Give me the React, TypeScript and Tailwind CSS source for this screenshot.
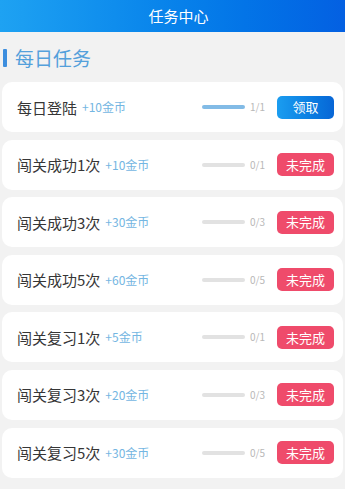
const tasks = [
  { name: "每日登陆", reward: "+10金币", done: 1, total: 1 },
  { name: "闯关成功1次", reward: "+10金币", done: 0, total: 1 },
  { name: "闯关成功3次", reward: "+30金币", done: 0, total: 3 },
  { name: "闯关成功5次", reward: "+60金币", done: 0, total: 5 },
  { name: "闯关复习1次", reward: "+5金币", done: 0, total: 1 },
  { name: "闯关复习3次", reward: "+20金币", done: 0, total: 3 },
  { name: "闯关复习5次", reward: "+30金币", done: 0, total: 5 },
];

export default function App() {
  return (
    <main
      className="min-h-screen w-full bg-[#f2f2f2]"
      style={{ fontFamily: '"Noto Sans CJK SC", "Noto Sans", sans-serif' }}
    >
      <header className="flex h-[32px] items-center justify-center bg-gradient-to-r from-[#1ea2f2] to-[#0460e2] pl-[12px] text-[15px] text-white">
        任务中心
      </header>

      <div className="flex h-[50px] items-center pl-[3px] pt-[1px]">
        <span className="h-[18px] w-[4px] rounded-[1px] bg-[#3d8ede]" />
        <h1 className="ml-[8px] text-[19px] leading-none text-[#54a0db]">每日任务</h1>
      </div>

      <section className="flex flex-col gap-[7.6px] px-[2px]">
        {tasks.map((task) => {
          const complete = task.done >= task.total;
          return (
            <div
              key={task.name}
              className="flex h-[50px] items-center rounded-[10px] bg-white pl-[15px] pr-[9px]"
            >
              <p className="text-[15px] leading-none text-[#363636]">{task.name}</p>
              <span className="ml-[5px] text-[12px] leading-none text-[#74b6e2]">{task.reward}</span>
              <div className="ml-auto flex items-center">
                <div
                  className={`h-[4px] w-[43px] rounded-full ${
                    complete ? "bg-[#82bbe6]" : "bg-[#e2e2e2]"
                  }`}
                />
                <span className="ml-[5px] w-[14px] text-[10px] leading-none text-[#b8b8b8]">
                  {task.done}/{task.total}
                </span>
                {complete ? (
                  <button
                    type="button"
                    className="ml-[13px] flex h-[23px] w-[57px] items-center justify-center rounded-[5px] bg-gradient-to-r from-[#1b9df0] to-[#0866d6] text-[13px] text-white"
                  >
                    领取
                  </button>
                ) : (
                  <button
                    type="button"
                    className="ml-[13px] flex h-[23px] w-[57px] items-center justify-center rounded-[5px] bg-[#ef4b6b] text-[13px] text-white"
                  >
                    未完成
                  </button>
                )}
              </div>
            </div>
          );
        })}
      </section>
    </main>
  );
}
